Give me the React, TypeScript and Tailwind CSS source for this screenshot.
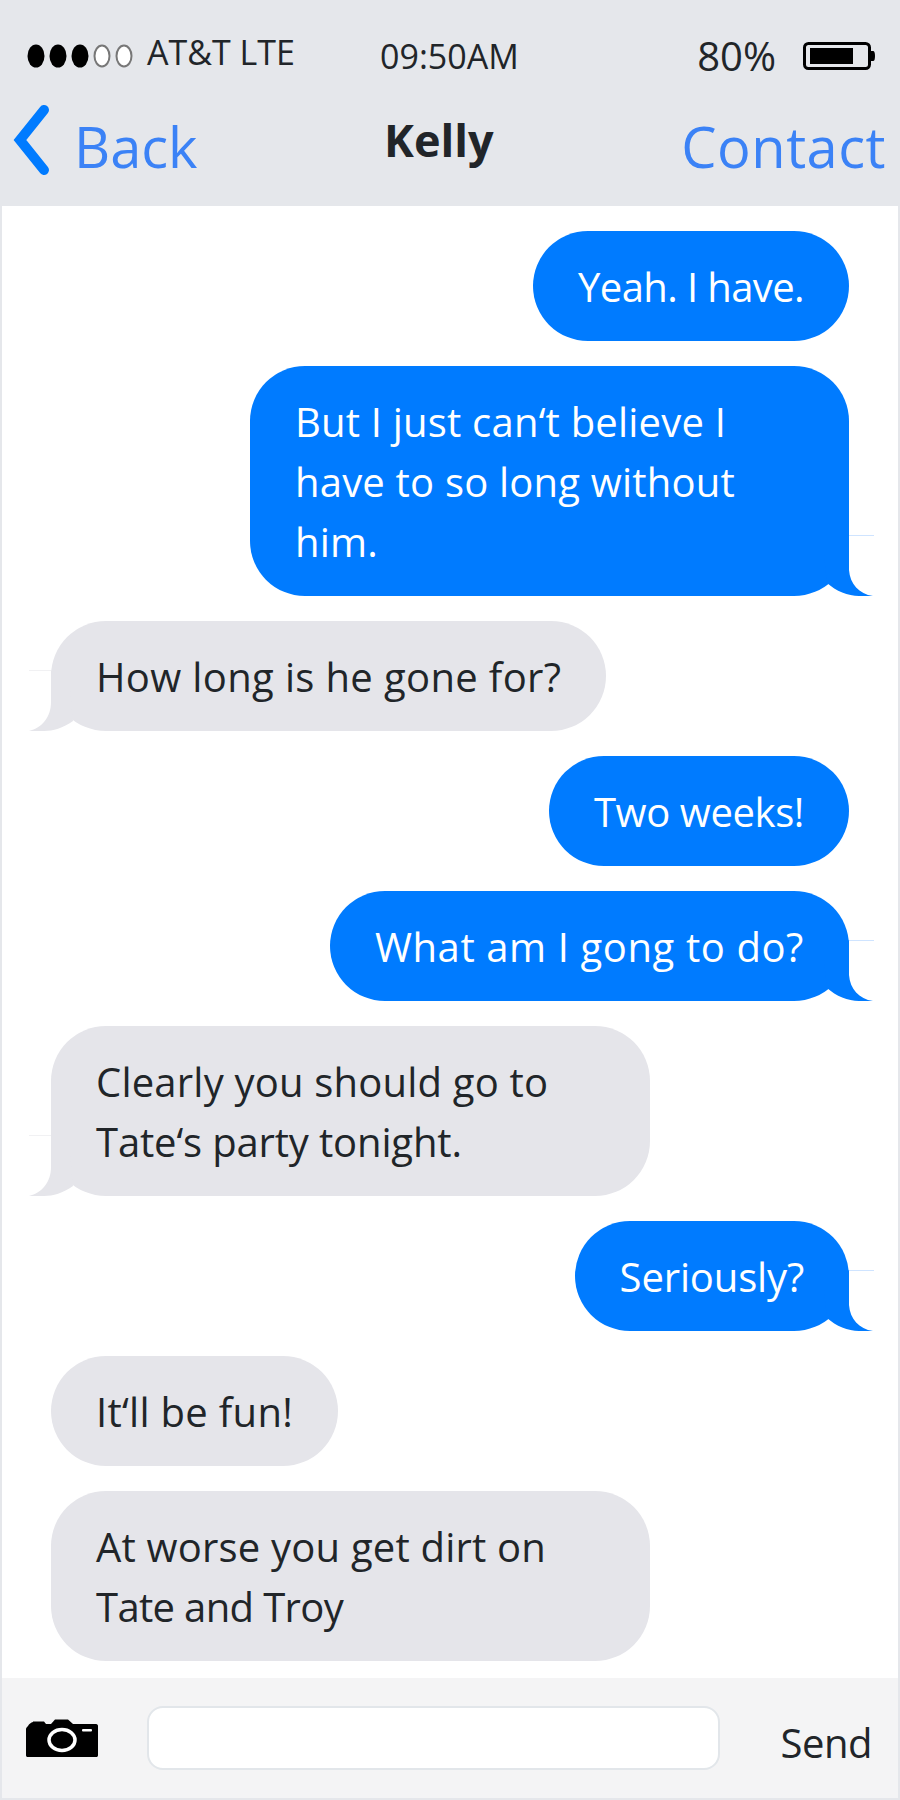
import type { ReactNode } from 'react';

type Side = 'me' | 'them';

interface Message {
  id: string;
  side: Side;
  text: ReactNode;
  tail?: boolean;
  tracking?: string;
}

const messages: Message[] = [
  { id: 'yeah', side: 'me', text: 'Yeah. I have.', tracking: 'tracking-[-0.6px]' },
  { id: 'believe', side: 'me', text: 'But I just can‘t believe I have to so long without him.', tail: true },
  { id: 'how', side: 'them', text: 'How long is he gone for?', tail: true, tracking: 'tracking-[0.35px]' },
  { id: 'two', side: 'me', text: 'Two weeks!', tracking: 'tracking-[-0.4px]' },
  { id: 'what', side: 'me', text: 'What am I gong to do?', tail: true, tracking: 'tracking-[0.6px]' },
  {
    id: 'clearly',
    side: 'them',
    text: (
      <>
        Clearly you should go to <span className="tracking-[-0.15px]">Tate‘s party tonight.</span>
      </>
    ),
    tail: true,
  },
  { id: 'seriously', side: 'me', text: 'Seriously?', tail: true, tracking: 'tracking-[-0.15px]' },
  { id: 'fun', side: 'them', text: 'It‘ll be fun!', tracking: 'tracking-[0.3px]' },
  {
    id: 'worse',
    side: 'them',
    text: (
      <>
        At worse you get dirt on <span className="tracking-[-0.65px]">Tate and Troy</span>
      </>
    ),
  },
];

function MeTail() {
  return (
    <svg className="absolute right-[-25px] bottom-0" width="60" height="61" viewBox="0 0 60 61">
      <path d="M35 0.5H60" stroke="#cfe4ff" strokeWidth="1" />
      <path d="M35 0V35C36 49 45 59 59 61H45C34 61 22 56 13 48L10 20Z" fill="#007bff" />
    </svg>
  );
}

function ThemTail() {
  return (
    <svg className="absolute bottom-0 left-[-22px]" width="60" height="61" viewBox="0 0 60 61">
      <path d="M0 0.5H22" stroke="#f1f1f3" strokeWidth="1" />
      <path d="M22 0V32C22 47 13 58 0 61H15C24 61 34 58 44 51L41 20Z" fill="#e5e5ea" />
    </svg>
  );
}

function Bubble({ side, text, tail, tracking = 'tracking-[0.2px]' }: Message) {
  const mine = side === 'me';
  return (
    <div
      className={`relative w-fit max-w-[599px] rounded-[55px] px-[45px] pt-[26px] pb-[24px] text-[40px] leading-[60px] ${tracking} ${
        mine ? 'self-end bg-[#007bff] text-white' : 'self-start bg-[#e5e5ea] text-[#212529]'
      }`}
    >
      {tail && (mine ? <MeTail /> : <ThemTail />)}
      <div className="relative">{text}</div>
    </div>
  );
}

function SignalDots() {
  return (
    <svg width="106" height="26" viewBox="0 0 106 26" className="blur-[0.5px]">
      <ellipse cx="9" cy="13" rx="8.5" ry="11.5" fill="#000" />
      <ellipse cx="31" cy="13" rx="8.5" ry="11.5" fill="#000" />
      <ellipse cx="53" cy="13" rx="8.5" ry="11.5" fill="#000" />
      <ellipse cx="75" cy="13" rx="7.5" ry="10.5" fill="#fff" stroke="#777" strokeWidth="2" />
      <ellipse cx="97" cy="13" rx="7.5" ry="10.5" fill="#fff" stroke="#777" strokeWidth="2" />
    </svg>
  );
}

function Battery() {
  return (
    <svg width="72" height="28" viewBox="0 0 72 28">
      <rect x="1.5" y="1.5" width="65" height="25" rx="4" fill="none" stroke="#000" strokeWidth="3" />
      <rect x="7" y="6" width="43" height="16" fill="#000" />
      <path d="M68 9H70C71.5 9 72 11 72 14C72 17 71.5 19 70 19H68Z" fill="#000" />
    </svg>
  );
}

function Camera() {
  return (
    <svg width="72" height="38" viewBox="0 0 72 38">
      <path
        d="M2 7C3 5 5 3.500 7 3V2.500H18L20 5H25L29 0.500H42L47 5H70C71.500 5 72 6 72 7V36C72 37.500 71.500 38 70 38H2C0.500 38 0 37.500 0 36V10C0 9 1 8 2 7Z"
        fill="#000"
      />
      <ellipse cx="36" cy="21" rx="13" ry="10.500" fill="none" stroke="#fff" strokeWidth="3.500" />
      <rect x="56" y="10" width="10" height="2.500" rx="1" fill="#fff" />
    </svg>
  );
}

export default function App() {
  return (
    <div className="flex h-[1800px] w-[900px] flex-col border-2 border-[#e5e7eb] bg-white font-['Open_Sans','Noto_Sans',sans-serif] text-[#212529]">
      <header className="h-[204px] shrink-0 bg-[#e5e7eb]">
        <div className="flex h-[108px] items-center pr-[23px] pl-[25px]">
          <div className="flex w-[353px] items-center">
            <SignalDots />
            <span className="-mt-[8px] ml-[14px] text-[34px] leading-none">AT&amp;T LTE</span>
          </div>
          <span className="text-[34px] leading-none">09:50AM</span>
          <span className="ml-auto text-[40px] leading-none">80%</span>
          <span className="ml-[27px]">
            <Battery />
          </span>
        </div>
        <div className="flex h-[96px] items-start pr-[12px] pl-[10px]">
          <div className="flex w-[372px] items-start">
            <svg width="44" height="76" viewBox="0 0 44 76" className="-mt-[7px]">
              <path d="M32 7L8 37L32 67" fill="none" stroke="#007bff" strokeWidth="10" strokeLinecap="round" />
            </svg>
            <span className="ml-[18px] text-[56px] leading-[72px] text-[#3b82f6]">Back</span>
          </div>
          <span className="text-[45px] leading-[60px] font-bold">Kelly</span>
          <span className="ml-auto text-[56px] leading-[72px] tracking-[0.5px] text-[#3b82f6]">Contact</span>
        </div>
      </header>

      <main className="flex flex-1 flex-col gap-[25px] pt-[25px] pr-[49px] pl-[49px]">
        {messages.map((message) => (
          <Bubble key={message.id} {...message} />
        ))}
      </main>

      <footer className="flex h-[120px] shrink-0 items-center bg-[#f4f4f5] pr-[26px] pl-[24px]">
        <Camera />
        <div className="ml-[49px] h-[64px] w-[573px] rounded-[16px] border-2 border-[#e2e6ea] bg-white" />
        <span className="mt-[10px] ml-auto text-[40px] leading-none tracking-[-0.5px]">Send</span>
      </footer>
    </div>
  );
}
